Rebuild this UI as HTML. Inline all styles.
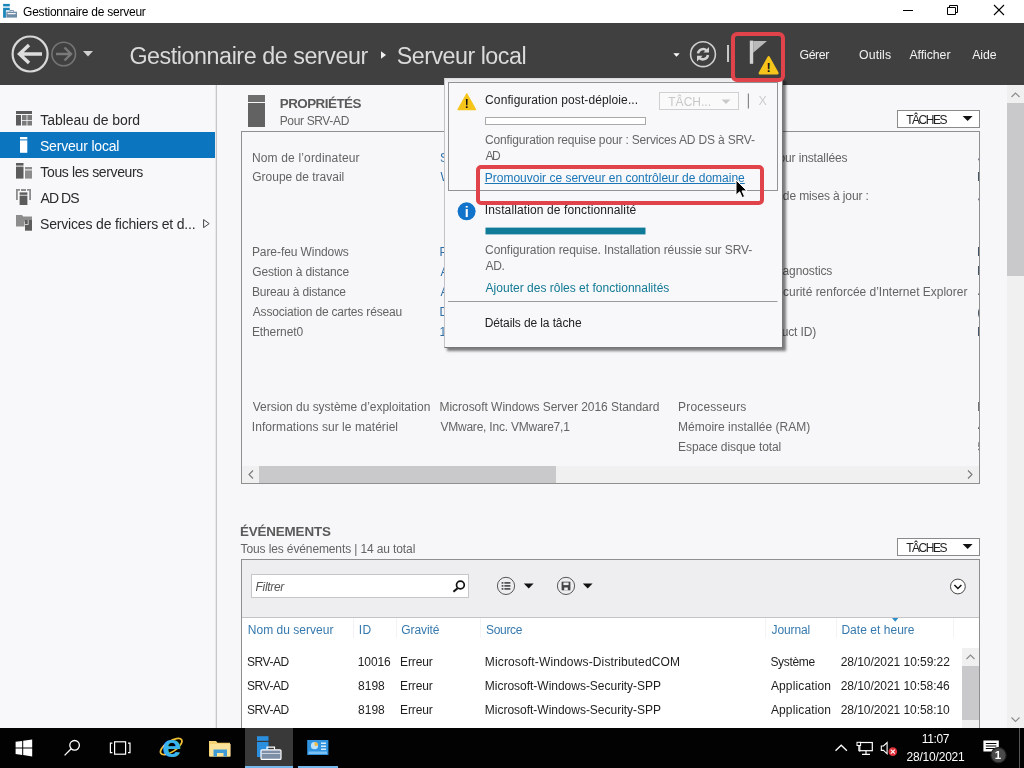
<!DOCTYPE html>
<html lang="fr"><head><meta charset="utf-8"><title>Gestionnaire de serveur</title>
<style>
html,body{margin:0;padding:0}
body{width:1024px;height:768px;overflow:hidden;position:relative;background:#f7f7f9;font-family:"Liberation Sans",sans-serif;}
.a{position:absolute;box-sizing:border-box}
.t{position:absolute;white-space:pre;font-family:"Liberation Sans",sans-serif;will-change:opacity}
svg{position:absolute;overflow:visible}
</style></head><body>
<div class="a" style="left:0px;top:0px;width:1024px;height:23px;background:#ffffff;"></div>
<div class="a" style="left:0px;top:23px;width:1024px;height:62px;background:#404040;"></div>
<div class="a" style="left:0px;top:85px;width:216px;height:643px;background:#f8f8fa;"></div>
<div class="a" style="left:215px;top:85px;width:1px;height:643px;background:#e9e9ec;"></div>
<div class="a" style="left:216px;top:85px;width:1px;height:643px;background:#c6c6ca;"></div>
<div class="a" style="left:217px;top:85px;width:807px;height:643px;background:#f7f7f9;"></div>
<svg style="left:0;top:0" width="22" height="22" viewBox="0 0 22 22"><rect x="3.1" y="3.9" width="6.7" height="2.5" fill="#1b86bb"/><path d="M3.1 7.8h6.7v2.4h-3.9v7.6h-2.8z" fill="#1b86bb"/><rect x="6.3" y="11.7" width="10.7" height="5.9" fill="#6f8da6"/><path d="M9.9 11.7v-1.2h3.6v1.2" fill="none" stroke="#6f8da6" stroke-width="0.9"/><path d="M7.2 13.1h8.9l-1 1.2h-6.9z" fill="#f4f7fa"/></svg>
<span class="t" style="left:23.10px;top:6.14px;font-size:12px;line-height:12px;letter-spacing:-0.241px;color:#000;">Gestionnaire de serveur</span>
<svg style="left:0;top:0" width="1024" height="23"><path d="M903 10.5h10" stroke="#000" stroke-width="1"/><path d="M947.5 7.5h8v7h-8z M949.5 7.5v-2h8v7h-2" fill="none" stroke="#000" stroke-width="1"/><path d="M994 5l10 10M1004 5l-10 10" stroke="#000" stroke-width="1.1"/></svg>
<svg style="left:0;top:23px" width="1024" height="61" viewBox="0 23 1024 61">
<circle cx="30.1" cy="54" r="17.5" fill="none" stroke="#d8d8d8" stroke-width="2.2"/>
<path d="M42 54H20M29 45l-9.5 9 9.5 9" fill="none" stroke="#dcdcdc" stroke-width="3.4"/>
<circle cx="63.7" cy="54" r="11.8" fill="none" stroke="#747474" stroke-width="1.6"/>
<path d="M56 54h14M64.5 47.5l6.5 6.5-6.5 6.5" fill="none" stroke="#7a7a7a" stroke-width="2.4"/>
<path d="M83 51h10l-5 5.5z" fill="#d0d0d0"/>
<path d="M381 51.3v7.4l5-3.7z" fill="#f0f0f0"/>
<path d="M673.3 53.2h6.4l-3.2 3.6z" fill="#ffffff"/>
<circle cx="703" cy="54.2" r="12.4" fill="none" stroke="#cfcfcf" stroke-width="1.6"/>
<path d="M698 53.400a5.200 5.200 0 0 1 8.600-3" fill="none" stroke="#d4d4d4" stroke-width="2.500"/>
<path d="M708 55a5.200 5.200 0 0 1 -8.600 3" fill="none" stroke="#d4d4d4" stroke-width="2.500"/>
<path d="M709 47v5.600h-5.600z" fill="#d4d4d4"/><path d="M697 61.400v-5.600h5.600z" fill="#d4d4d4"/>
<rect x="727" y="45" width="2" height="17" fill="#c8c8c8"/>
</svg>
<span class="t" style="left:129.38px;top:44.58px;font-size:23.3px;line-height:23.3px;letter-spacing:-0.438px;color:#dadada;">Gestionnaire de serveur</span>
<span class="t" style="left:396.70px;top:44.58px;font-size:23.3px;line-height:23.3px;letter-spacing:-0.506px;color:#dadada;">Serveur local</span>
<span class="t" style="left:799.50px;top:48.89px;font-size:12.3px;line-height:12.3px;letter-spacing:-0.419px;color:#f2f2f2;">Gérer</span>
<span class="t" style="left:859.00px;top:48.89px;font-size:12.3px;line-height:12.3px;letter-spacing:0.120px;color:#f2f2f2;">Outils</span>
<span class="t" style="left:909.40px;top:48.89px;font-size:12.3px;line-height:12.3px;letter-spacing:-0.054px;color:#f2f2f2;">Afficher</span>
<span class="t" style="left:972.20px;top:48.89px;font-size:12.3px;line-height:12.3px;letter-spacing:-0.108px;color:#f2f2f2;">Aide</span>
<div class="a" style="left:0px;top:132px;width:215px;height:25.6px;background:#0b75c0;"></div>
<span class="t" style="left:40.35px;top:113.45px;font-size:14px;line-height:14px;letter-spacing:-0.048px;color:#2b2b2b;">Tableau de bord</span>
<span class="t" style="left:39.98px;top:139.45px;font-size:14px;line-height:14px;letter-spacing:-0.188px;color:#ffffff;">Serveur local</span>
<span class="t" style="left:40.35px;top:165.45px;font-size:14px;line-height:14px;letter-spacing:-0.372px;color:#2b2b2b;">Tous les serveurs</span>
<span class="t" style="left:40.60px;top:191.45px;font-size:14px;line-height:14px;letter-spacing:-0.963px;color:#2b2b2b;">AD DS</span>
<span class="t" style="left:39.98px;top:217.45px;font-size:14px;line-height:14px;letter-spacing:-0.169px;color:#2b2b2b;">Services de fichiers et d...</span>
<svg style="left:0;top:84px" width="216" height="160" viewBox="0 84 216 160">
<rect x="16" y="111" width="16" height="3" fill="#5c5c5c"/>
<rect x="16" y="115" width="5" height="10.5" fill="#5c5c5c"/>
<rect x="22" y="115" width="4.6" height="5" fill="#7b7b7b"/><rect x="27.4" y="115" width="4.6" height="5" fill="#7b7b7b"/>
<rect x="22" y="120.8" width="4.6" height="4.7" fill="#7b7b7b"/><rect x="27.4" y="120.8" width="4.6" height="4.7" fill="#7b7b7b"/>
<rect x="20" y="137" width="7.3" height="2.4" fill="#ffffff"/><rect x="20" y="140.4" width="7.3" height="12.4" fill="#ffffff"/>
<rect x="16" y="163" width="7.5" height="2.6" fill="#5c5c5c"/><rect x="16" y="166.6" width="7.5" height="12" fill="#5c5c5c"/>
<rect x="25" y="167" width="7" height="2.4" fill="#8d8d8d"/><rect x="25" y="170.4" width="7" height="8.2" fill="#8d8d8d"/>
<path d="M16 189h4v1.8h-2.2v9.2h-1.8zM31 189h-4v1.8h2.2v9.2h1.8z" fill="#8d8d8d"/>
<rect x="21" y="189" width="5" height="2" fill="#8d8d8d"/>
<rect x="19.6" y="192.4" width="7.8" height="2.4" fill="#5c5c5c"/><rect x="19.6" y="195.6" width="7.8" height="9.4" fill="#5c5c5c"/>
<path d="M16 215h6l1.2 1.6h8.8v5h-16z" fill="#8d8d8d"/><rect x="16" y="219" width="8.5" height="7.5" fill="#8d8d8d"/>
<path d="M25 220h7v10.7h-7z" fill="#5c5c5c"/><path d="M25 224.5l3.2 0 0-4.5" fill="none" stroke="#e8e8e8" stroke-width="0.8"/>
<path d="M203.6 219.6v8l5.6-4z" fill="none" stroke="#444" stroke-width="1"/>
</svg>
<div class="a" style="left:248px;top:95px;width:17px;height:7px;background:#6e6e6e;"></div>
<div class="a" style="left:248px;top:103px;width:17px;height:24px;background:#626262;"></div>
<span class="t" style="left:279.73px;top:96.96px;font-size:13.4px;line-height:13.4px;letter-spacing:-0.511px;color:#5a5a5a;font-weight:bold;">PROPRIÉTÉS</span>
<span class="t" style="left:279.73px;top:115.14px;font-size:12px;line-height:12px;letter-spacing:-0.355px;color:#646464;">Pour SRV-AD</span>
<div class="a" style="left:897px;top:110px;width:83px;height:18px;background:#ffffff;border:1px solid #8a8a8a;"></div>
<span class="t" style="left:906.15px;top:114.14px;font-size:12px;line-height:12px;letter-spacing:-1.455px;color:#222;">TÂCHES</span>
<svg style="left:962px;top:116px" width="11" height="6"><path d="M0.6 0h10l-5 5z" fill="#111"/></svg>
<div class="a" style="left:241px;top:131px;width:739px;height:353px;background:#f7f7f9;border:1px solid #8f8f8f;"></div>
<span class="t" style="left:251.93px;top:152.14px;font-size:12px;line-height:12px;letter-spacing:0.164px;color:#646464;">Nom de l’ordinateur</span>
<span class="t" style="left:252.30px;top:171.14px;font-size:12px;line-height:12px;letter-spacing:-0.009px;color:#646464;">Groupe de travail</span>
<span class="t" style="left:251.93px;top:246.14px;font-size:12px;line-height:12px;letter-spacing:-0.077px;color:#646464;">Pare-feu Windows</span>
<span class="t" style="left:252.30px;top:266.14px;font-size:12px;line-height:12px;letter-spacing:-0.153px;color:#646464;">Gestion à distance</span>
<span class="t" style="left:251.93px;top:286.14px;font-size:12px;line-height:12px;letter-spacing:-0.173px;color:#646464;">Bureau à distance</span>
<span class="t" style="left:252.80px;top:306.14px;font-size:12px;line-height:12px;letter-spacing:-0.176px;color:#646464;">Association de cartes réseau</span>
<span class="t" style="left:251.93px;top:326.14px;font-size:12px;line-height:12px;letter-spacing:-0.106px;color:#646464;">Ethernet0</span>
<span class="t" style="left:252.80px;top:401.14px;font-size:12px;line-height:12px;letter-spacing:-0.018px;color:#646464;">Version du système d’exploitation</span>
<span class="t" style="left:251.80px;top:421.14px;font-size:12px;line-height:12px;letter-spacing:0.056px;color:#646464;">Informations sur le matériel</span>
<span class="t" style="left:439.90px;top:152.14px;font-size:12px;line-height:12px;letter-spacing:-0.420px;color:#2f6fa6;">SRV-AD</span>
<span class="t" style="left:440.40px;top:171.14px;font-size:12px;line-height:12px;letter-spacing:-0.420px;color:#2f6fa6;">WORKGROUP</span>
<span class="t" style="left:439.52px;top:246.14px;font-size:12px;line-height:12px;letter-spacing:-0.420px;color:#2f6fa6;">Privé : Actif</span>
<span class="t" style="left:440.40px;top:266.14px;font-size:12px;line-height:12px;letter-spacing:-0.420px;color:#2f6fa6;">Activé</span>
<span class="t" style="left:440.40px;top:286.14px;font-size:12px;line-height:12px;letter-spacing:-0.420px;color:#2f6fa6;">Activé</span>
<span class="t" style="left:439.52px;top:306.14px;font-size:12px;line-height:12px;letter-spacing:-0.420px;color:#2f6fa6;">Désactivé</span>
<span class="t" style="left:439.52px;top:326.14px;font-size:12px;line-height:12px;letter-spacing:-0.420px;color:#2f6fa6;">192.168.1.10</span>
<span class="t" style="left:439.52px;top:401.14px;font-size:12px;line-height:12px;letter-spacing:-0.043px;color:#646464;">Microsoft Windows Server 2016 Standard</span>
<span class="t" style="left:440.40px;top:421.14px;font-size:12px;line-height:12px;letter-spacing:-0.219px;color:#646464;">VMware, Inc. VMware7,1</span>
<span class="t" style="left:678.30px;top:152.14px;font-size:12px;line-height:12px;letter-spacing:-0.131px;color:#646464;">Dernières mises à jour installées</span>
<span class="t" style="left:689.75px;top:171.14px;font-size:12px;line-height:12px;letter-spacing:-0.385px;color:#646464;">Windows Update</span>
<span class="t" style="left:679.17px;top:190.14px;font-size:12px;line-height:12px;letter-spacing:-0.125px;color:#646464;">Dernière recherche de mises à jour :</span>
<span class="t" style="left:679.92px;top:246.14px;font-size:12px;line-height:12px;letter-spacing:-0.411px;color:#646464;">Windows Defender</span>
<span class="t" style="left:680.47px;top:265.14px;font-size:12px;line-height:12px;letter-spacing:-0.109px;color:#646464;">Commentaires et diagnostics</span>
<span class="t" style="left:679.21px;top:286.14px;font-size:12px;line-height:12px;letter-spacing:-0.012px;color:#646464;">Configuration de sécurité renforcée d’Internet Explorer</span>
<span class="t" style="left:683.87px;top:306.14px;font-size:12px;line-height:12px;letter-spacing:-0.317px;color:#646464;">Fuseau horaire</span>
<span class="t" style="left:682.81px;top:326.14px;font-size:12px;line-height:12px;letter-spacing:-0.133px;color:#646464;">ID de produit (Product ID)</span>
<span class="t" style="left:678.12px;top:401.14px;font-size:12px;line-height:12px;letter-spacing:0.150px;color:#646464;">Processeurs</span>
<span class="t" style="left:678.12px;top:421.14px;font-size:12px;line-height:12px;letter-spacing:0.000px;color:#646464;">Mémoire installée (RAM)</span>
<span class="t" style="left:678.12px;top:441.14px;font-size:12px;line-height:12px;letter-spacing:-0.090px;color:#646464;">Espace disque total</span>
<div class="a" style="left:977.4px;top:140px;width:1.4px;height:320px;overflow:hidden">
<span class="t" style="left:0.38px;top:11.14px;font-size:12px;line-height:12px;letter-spacing:-0.420px;color:#456;">Jamais</span>
<span class="t" style="left:-0.38px;top:31.14px;font-size:12px;line-height:12px;letter-spacing:-0.420px;color:#456;">Non configuré</span>
<span class="t" style="left:0.38px;top:51.14px;font-size:12px;line-height:12px;letter-spacing:-0.420px;color:#456;">Jamais</span>
<span class="t" style="left:-0.38px;top:106.14px;font-size:12px;line-height:12px;letter-spacing:-0.420px;color:#456;">Protection</span>
<span class="t" style="left:-0.38px;top:125.14px;font-size:12px;line-height:12px;letter-spacing:-0.420px;color:#456;">Paramètres</span>
<span class="t" style="left:0.50px;top:145.14px;font-size:12px;line-height:12px;letter-spacing:-0.420px;color:#456;">Actif</span>
<span class="t" style="left:-0.12px;top:166.14px;font-size:12px;line-height:12px;letter-spacing:-0.420px;color:#456;">(UTC+01:00)</span>
<span class="t" style="left:-0.38px;top:186.14px;font-size:12px;line-height:12px;letter-spacing:-0.420px;color:#456;">Non activé</span>
<span class="t" style="left:-0.50px;top:261.14px;font-size:12px;line-height:12px;letter-spacing:-0.420px;color:#646464;">Intel(R)</span>
<span class="t" style="left:0.25px;top:281.14px;font-size:12px;line-height:12px;letter-spacing:-0.420px;color:#646464;">4 Go</span>
<span class="t" style="left:0.12px;top:301.14px;font-size:12px;line-height:12px;letter-spacing:-0.420px;color:#646464;">59,51 Go</span>
</div>
<div class="a" style="left:242px;top:466px;width:737px;height:17px;background:#f0f0f1;"></div>
<div class="a" style="left:259px;top:466px;width:296.5px;height:17px;background:#c9c9cc;"></div>
<svg style="left:242px;top:466px" width="737" height="17"><path d="M11 4.5l-4 4 4 4" fill="none" stroke="#777" stroke-width="1.1"/><path d="M726 4.5l4 4-4 4" fill="none" stroke="#777" stroke-width="1.1"/></svg>
<div class="a" style="left:1007px;top:85px;width:17px;height:643px;background:#f0f0f1;"></div>
<div class="a" style="left:1007px;top:103px;width:17px;height:172.5px;background:#c9c9cc;"></div>
<svg style="left:1007px;top:84px" width="17" height="644"><path d="M4.5 13l4-4 4 4" fill="none" stroke="#8a8a8a" stroke-width="1.1"/><path d="M4.5 633.5l4 4 4-4" fill="none" stroke="#8a8a8a" stroke-width="1.1"/></svg>
<span class="t" style="left:239.93px;top:524.96px;font-size:13.4px;line-height:13.4px;letter-spacing:-0.144px;color:#5a5a5a;font-weight:bold;">ÉVÉNEMENTS</span>
<span class="t" style="left:240.55px;top:543.14px;font-size:12px;line-height:12px;letter-spacing:-0.119px;color:#646464;">Tous les événements | 14 au total</span>
<div class="a" style="left:897px;top:538px;width:83px;height:18px;background:#ffffff;border:1px solid #8a8a8a;"></div>
<span class="t" style="left:906.15px;top:542.14px;font-size:12px;line-height:12px;letter-spacing:-1.455px;color:#222;">TÂCHES</span>
<svg style="left:962px;top:544px" width="11" height="6"><path d="M0.6 0h10l-5 5z" fill="#111"/></svg>
<div class="a" style="left:241px;top:559px;width:739px;height:180px;background:#ffffff;border:1px solid #8f8f8f;"></div>
<div class="a" style="left:242px;top:560px;width:737px;height:57.5px;background:#eeeef0;border-bottom:1px solid #c4c4c8;"></div>
<div class="a" style="left:251px;top:574px;width:218px;height:24px;background:#ffffff;border:1px solid #c6c6c9;"></div>
<span class="t" style="left:255.55px;top:581.14px;font-size:12px;line-height:12px;letter-spacing:-0.312px;color:#555;font-style:italic;">Filtrer</span>
<svg style="left:440px;top:570px" width="540" height="40" viewBox="440 570 540 40">
<circle cx="460.4" cy="585" r="3.9" fill="none" stroke="#111" stroke-width="1.7"/><path d="M457.6 588.2l-4.2 3.6" stroke="#111" stroke-width="2"/>
<circle cx="506" cy="585.9" r="8.6" fill="none" stroke="#555" stroke-width="1"/>
<g fill="#444" transform="translate(0 0.5)"><rect x="501.6" y="581.6" width="1.8" height="1.6"/><rect x="504.4" y="581.6" width="6" height="1.6"/><rect x="501.6" y="584.6" width="1.8" height="1.6"/><rect x="504.4" y="584.6" width="6" height="1.6"/><rect x="501.6" y="587.6" width="1.8" height="1.6"/><rect x="504.4" y="587.6" width="6" height="1.6"/></g>
<path d="M523.8 583.4h9.8l-4.9 5z" fill="#111"/>
<circle cx="566" cy="585.9" r="8.6" fill="none" stroke="#555" stroke-width="1"/>
<path d="M561.6 581.7h8.8v8.6h-8.8z" fill="#444"/><rect x="563.4" y="582.5" width="5.2" height="2.6" fill="#eeeef0"/><rect x="564.2" y="587.5" width="3.6" height="2.8" fill="#eeeef0"/>
<path d="M582.8 583.4h9.8l-4.9 5z" fill="#111"/>
<circle cx="957.9" cy="586.5" r="7.4" fill="#fff" stroke="#444" stroke-width="1"/><path d="M954.4 585l3.5 3.5 3.5-3.5" fill="none" stroke="#111" stroke-width="1.5"/>
</svg>
<span class="t" style="left:247.82px;top:624.14px;font-size:12px;line-height:12px;letter-spacing:0.017px;color:#3679ad;">Nom du serveur</span>
<span class="t" style="left:358.70px;top:624.14px;font-size:12px;line-height:12px;letter-spacing:0.400px;color:#3679ad;">ID</span>
<span class="t" style="left:401.30px;top:624.14px;font-size:12px;line-height:12px;letter-spacing:-0.075px;color:#3679ad;">Gravité</span>
<span class="t" style="left:486.00px;top:624.14px;font-size:12px;line-height:12px;letter-spacing:-0.325px;color:#3679ad;">Source</span>
<span class="t" style="left:771.58px;top:624.14px;font-size:12px;line-height:12px;letter-spacing:-0.117px;color:#3679ad;">Journal</span>
<span class="t" style="left:841.42px;top:624.14px;font-size:12px;line-height:12px;letter-spacing:0.035px;color:#3679ad;">Date et heure</span>
<svg style="left:892px;top:618px" width="7" height="4"><path d="M0 0h6.4l-3.2 3.8z" fill="#2f8fc8"/></svg>
<div class="a" style="left:352.5px;top:618px;width:1px;height:20px;background:#f3f3f5;"></div>
<div class="a" style="left:395.5px;top:618px;width:1px;height:20px;background:#f3f3f5;"></div>
<div class="a" style="left:479.5px;top:618px;width:1px;height:20px;background:#f3f3f5;"></div>
<div class="a" style="left:765px;top:618px;width:1px;height:20px;background:#f3f3f5;"></div>
<div class="a" style="left:835.5px;top:618px;width:1px;height:20px;background:#f3f3f5;"></div>
<div class="a" style="left:953px;top:618px;width:1px;height:20px;background:#f3f3f5;"></div>
<span class="t" style="left:247.10px;top:656.14px;font-size:12px;line-height:12px;letter-spacing:-0.475px;color:#1e1e1e;">SRV-AD</span>
<span class="t" style="left:357.73px;top:656.14px;font-size:12px;line-height:12px;letter-spacing:-0.081px;color:#1e1e1e;">10016</span>
<span class="t" style="left:400.12px;top:656.14px;font-size:12px;line-height:12px;letter-spacing:-0.155px;color:#1e1e1e;">Erreur</span>
<span class="t" style="left:484.82px;top:656.14px;font-size:12px;line-height:12px;letter-spacing:0.145px;color:#1e1e1e;">Microsoft-Windows-DistributedCOM</span>
<span class="t" style="left:770.40px;top:656.14px;font-size:12px;line-height:12px;letter-spacing:-0.325px;color:#1e1e1e;">Système</span>
<span class="t" style="left:840.70px;top:656.14px;font-size:12px;line-height:12px;letter-spacing:-0.050px;color:#1e1e1e;">28/10/2021 10:59:22</span>
<span class="t" style="left:247.10px;top:680.14px;font-size:12px;line-height:12px;letter-spacing:-0.475px;color:#1e1e1e;">SRV-AD</span>
<span class="t" style="left:358.10px;top:680.14px;font-size:12px;line-height:12px;letter-spacing:-0.017px;color:#1e1e1e;">8198</span>
<span class="t" style="left:400.12px;top:680.14px;font-size:12px;line-height:12px;letter-spacing:-0.155px;color:#1e1e1e;">Erreur</span>
<span class="t" style="left:484.82px;top:680.14px;font-size:12px;line-height:12px;letter-spacing:-0.016px;color:#1e1e1e;">Microsoft-Windows-Security-SPP</span>
<span class="t" style="left:770.90px;top:680.14px;font-size:12px;line-height:12px;letter-spacing:0.140px;color:#1e1e1e;">Application</span>
<span class="t" style="left:840.70px;top:680.14px;font-size:12px;line-height:12px;letter-spacing:-0.057px;color:#1e1e1e;">28/10/2021 10:58:46</span>
<span class="t" style="left:247.10px;top:704.14px;font-size:12px;line-height:12px;letter-spacing:-0.475px;color:#1e1e1e;">SRV-AD</span>
<span class="t" style="left:358.10px;top:704.14px;font-size:12px;line-height:12px;letter-spacing:-0.017px;color:#1e1e1e;">8198</span>
<span class="t" style="left:400.12px;top:704.14px;font-size:12px;line-height:12px;letter-spacing:-0.155px;color:#1e1e1e;">Erreur</span>
<span class="t" style="left:484.82px;top:704.14px;font-size:12px;line-height:12px;letter-spacing:-0.016px;color:#1e1e1e;">Microsoft-Windows-Security-SPP</span>
<span class="t" style="left:770.90px;top:704.14px;font-size:12px;line-height:12px;letter-spacing:0.140px;color:#1e1e1e;">Application</span>
<span class="t" style="left:840.70px;top:704.14px;font-size:12px;line-height:12px;letter-spacing:-0.057px;color:#1e1e1e;">28/10/2021 10:58:10</span>
<div class="a" style="left:962px;top:648px;width:17px;height:80px;background:#f0f0f1;"></div>
<div class="a" style="left:962px;top:665.5px;width:17px;height:54px;background:#c9c9cc;"></div>
<svg style="left:962px;top:648px" width="17" height="18"><path d="M4.5 11l4-4 4 4" fill="none" stroke="#8a8a8a" stroke-width="1.1"/></svg>
<div class="a" style="left:0px;top:728px;width:1024px;height:40px;background:#020202;"></div>
<div class="a" style="left:245px;top:728px;width:48px;height:40px;background:#393939;"></div>
<div class="a" style="left:245px;top:766px;width:48px;height:2px;background:#76b9ed;"></div>
<div class="a" style="left:298px;top:766px;width:40px;height:2px;background:#76b9ed;"></div>
<svg style="left:0;top:728px" width="1024" height="40" viewBox="0 728 1024 40">
<g fill="#fff"><path d="M15.6 741.8l6.6-0.9v6.6h-6.6z"/><path d="M23.2 740.8l9-1.3v8h-9z"/><path d="M15.6 748.5h6.6v6.5l-6.6-0.9z"/><path d="M23.2 748.5h9v7.9l-9-1.3z"/></g>
<circle cx="74.6" cy="745.3" r="4.8" fill="none" stroke="#fff" stroke-width="1.3"/><path d="M71.2 748.8l-6.6 6.6" stroke="#fff" stroke-width="1.3"/>
<rect x="114.6" y="741.8" width="11" height="12.4" fill="none" stroke="#fff" stroke-width="1.2"/>
<path d="M112.4 743.2h-2v9.4h2M128 743.2h2v9.4h-2" fill="none" stroke="#fff" stroke-width="1.2"/>
<!-- IE -->
<ellipse cx="171.200" cy="746.500" rx="12.400" ry="5.200" transform="rotate(-33 171.200 746.500)" fill="none" stroke="#f1c232" stroke-width="1.700"/>
<text x="162" y="757.200" font-family="Liberation Sans, sans-serif" font-weight="bold" font-size="32" fill="#3ab4ec" textLength="19.500" lengthAdjust="spacingAndGlyphs">e</text>
<!-- folder -->
<path d="M209 741h7l1.500 1.800h12.500v13.700h-21z" fill="#f5d273"/><path d="M210 744h20.600v12.500h-20.600z" fill="#fbe39a"/>
<path d="M213.500 749.500h13.500v7h-3.500v-3.500h-6.500v3.500h-3.500z" fill="#3f9bd5"/>
<!-- server manager -->
<rect x="257" y="736.200" width="11.500" height="4.600" fill="#2b8fe0"/><rect x="257" y="742" width="11.500" height="15" fill="#2b8fe0"/>
<rect x="261" y="749.800" width="20" height="9.600" rx="1" fill="#7c8fa6" stroke="#fff" stroke-width="1.200"/>
<path d="M267 749.500v-2.300h7.500v2.300" fill="none" stroke="#fff" stroke-width="1.200"/><path d="M261.500 753.500h19" stroke="#dfe6ee" stroke-width="0.800"/>
<!-- second app -->
<rect x="307.200" y="740" width="21.200" height="15" fill="#2f93e0"/><rect x="308.500" y="751.500" width="18.500" height="2.500" fill="#7cc1f3"/>
<circle cx="314.500" cy="745.700" r="3.600" fill="#bfe3fb"/><path d="M314.500 745.700v-3.600a3.600 3.600 0 0 1 3.600 3.600z" fill="#f4b942"/>
<rect x="321" y="742.500" width="5" height="1.500" fill="#d6ecfb"/><rect x="321" y="745.500" width="5" height="1.500" fill="#d6ecfb"/><rect x="321" y="748.500" width="5" height="1.500" fill="#d6ecfb"/>
<!-- tray -->
<path d="M835.500 750.800l5.700-5.600 5.700 5.600" fill="none" stroke="#fff" stroke-width="1.300"/>
<rect x="859.800" y="742.500" width="12.500" height="8.200" fill="none" stroke="#fff" stroke-width="1.200"/><path d="M866 750.700v3.300M862 754.300h8" stroke="#fff" stroke-width="1.200"/>
<rect x="857" y="742.300" width="3.600" height="3.200" fill="#020202" stroke="#fff" stroke-width="1"/><path d="M858.800 745.500v5.500h1.500" fill="none" stroke="#fff" stroke-width="1"/>
<path d="M881.300 746h2.200l3.600-3.400v11.200l-3.600-3.400h-2.200z" fill="none" stroke="#fff" stroke-width="1.100"/>
<circle cx="892.800" cy="751.600" r="4.300" fill="#e0303a"/><path d="M890.800 749.600l4 4M894.800 749.600l-4 4" stroke="#fff" stroke-width="1.100"/>
<path d="M983.400 740.600h15.400v11h-4.200v3.400l-3.600-3.400h-7.600z" fill="#fff"/><path d="M985.800 743.500h10.600M985.800 746h10.600M985.800 748.500h10.600" stroke="#020202" stroke-width="1"/>
<circle cx="998.500" cy="755.200" r="7.600" fill="#4a4a4a" stroke="#222" stroke-width="1.200"/>
<rect x="1019" y="728" width="1" height="40" fill="#555"/>
</svg>
<span class="t" style="left:921.73px;top:733.14px;font-size:12px;line-height:12px;letter-spacing:-0.338px;color:#fff;">11:07</span>
<span class="t" style="left:906.50px;top:751.14px;font-size:12px;line-height:12px;letter-spacing:-0.200px;color:#fff;">28/10/2021</span>
<span class="t" style="left:994.77px;top:749.57px;font-size:11.5px;line-height:11.5px;letter-spacing:0.700px;color:#fff;font-weight:bold;">1</span>
<div class="a" style="left:735px;top:36px;width:46px;height:44px;background:#3e3e3e;"></div>
<svg style="left:730px;top:30px" width="60" height="54" viewBox="730 30 60 54">
<rect x="749.800" y="40.600" width="3.400" height="23.200" fill="#d2d2d2"/>
<path d="M753.200 40.900h13.800l-13.800 11.800z" fill="#b9b9b9"/>
<path d="M768.650 57.300l8.800 15.900h-17.600z" fill="#f6c51b" stroke="#f6c51b" stroke-width="2.400" stroke-linejoin="round"/>
<text x="768.650" y="72" text-anchor="middle" font-family="Liberation Sans, sans-serif" font-weight="bold" font-size="12.500" fill="#111">!</text>
</svg>
<div class="a" style="left:444px;top:77.7px;width:338.5px;height:270.8px;background:linear-gradient(#e6e6e8,#f8f8fa 5px);border:1px solid #c4c4c8;border-top-color:#dcdcde;border-right-color:#77777b;border-bottom-color:#77777b;box-shadow:2.5px 2.5px 2.5px rgba(0,0,0,0.5);"></div>
<div class="a" style="left:448px;top:82px;width:329.5px;height:109.4px;background:#f8f8fa;border:1px solid #939395;"></div>
<svg style="left:444px;top:80px" width="340" height="270" viewBox="444 80 340 270">
<path d="M466.800 93.800l8.800 15.800h-17.600z" fill="#f6c51b" stroke="#f6c51b" stroke-width="1.200" stroke-linejoin="round"/>
<text x="466.850" y="108.200" text-anchor="middle" font-family="Liberation Sans, sans-serif" font-weight="bold" font-size="12" fill="#111">!</text>
<rect x="485.500" y="117.500" width="160" height="7" fill="#fff" stroke="#a9a9a9" stroke-width="1"/>
<rect x="659.500" y="92.500" width="79" height="17" fill="#fafafa" stroke="#d0d0d0" stroke-width="1"/>
<path d="M721.500 99.500h9l-4.500 4.500z" fill="#c9c9c9"/>
<rect x="747.800" y="93.500" width="1.200" height="15" fill="#888"/>
<circle cx="466.600" cy="211.300" r="9" fill="#1173c9"/>
<text x="466.650" y="216.700" text-anchor="middle" font-family="Liberation Sans, sans-serif" font-weight="bold" font-size="14.500" fill="#fff">i</text>
<rect x="485.500" y="227.600" width="160" height="6.800" fill="#0f7b98"/>
<rect x="448" y="301" width="329.500" height="1" fill="#9a9a9a"/>
</svg>
<span class="t" style="left:485.10px;top:94.14px;font-size:12px;line-height:12px;letter-spacing:0.104px;color:#222222;">Configuration post-déploie...</span>
<span class="t" style="left:668.25px;top:96.14px;font-size:12px;line-height:12px;letter-spacing:0.021px;color:#c8c8c8;">TÂCH...</span>
<span class="t" style="left:758.45px;top:94.72px;font-size:12.5px;line-height:12.5px;letter-spacing:0.425px;color:#cdcdcd;">X</span>
<span class="t" style="left:485.10px;top:134.14px;font-size:12px;line-height:12px;letter-spacing:-0.165px;color:#666666;">Configuration requise pour : Services AD DS à SRV-</span>
<span class="t" style="left:485.60px;top:150.14px;font-size:12px;line-height:12px;letter-spacing:-1.525px;color:#666666;">AD</span>
<span class="t" style="left:484.73px;top:172.14px;font-size:12px;line-height:12px;letter-spacing:-0.002px;color:#1a76b6;text-decoration:underline;">Promouvoir ce serveur en contrôleur de domaine</span>
<span class="t" style="left:484.80px;top:204.14px;font-size:12px;line-height:12px;letter-spacing:0.116px;color:#222222;">Installation de fonctionnalité</span>
<span class="t" style="left:485.10px;top:244.14px;font-size:12px;line-height:12px;letter-spacing:-0.079px;color:#666666;">Configuration requise. Installation réussie sur SRV-</span>
<span class="t" style="left:485.60px;top:260.14px;font-size:12px;line-height:12px;letter-spacing:-0.338px;color:#666666;">AD.</span>
<span class="t" style="left:485.60px;top:282.14px;font-size:12px;line-height:12px;letter-spacing:0.008px;color:#137a94;">Ajouter des rôles et fonctionnalités</span>
<span class="t" style="left:484.73px;top:317.14px;font-size:12px;line-height:12px;letter-spacing:-0.104px;color:#222222;">Détails de la tâche</span>
<div class="a" style="left:731px;top:32px;width:54px;height:50px;border:4.200px solid #e0434a;border-radius:6px;"></div>
<div class="a" style="left:476px;top:164.8px;width:288.2px;height:40.4px;border:4.500px solid #e0434a;border-radius:5px;"></div>
<svg style="left:735px;top:179px" width="14" height="20" viewBox="0 0 14 20"><path d="M1 1v15.200l3.600-3.400 2.600 5.800 2.400-1.100-2.600-5.600h5z" fill="#000" stroke="#fff" stroke-width="1"/></svg>
</body></html>
